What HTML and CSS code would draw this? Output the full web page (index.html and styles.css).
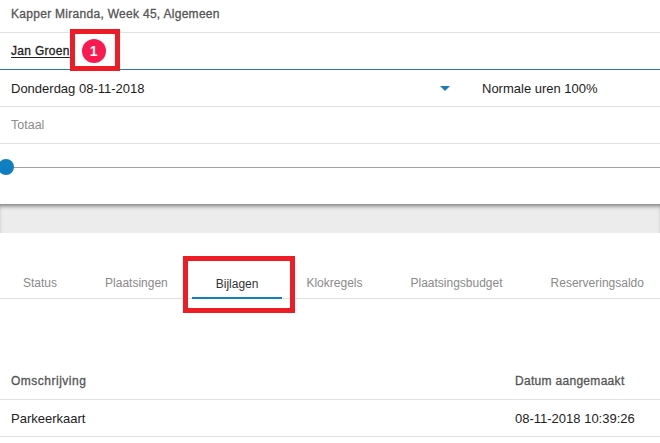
FILE: index.html
```html
<!DOCTYPE html>
<html lang="nl">
<head>
<meta charset="utf-8">
<title>Bijlagen</title>
<link rel="stylesheet" href="styles.css">
</head>
<body>
<div class="page">
  <section class="panel">
    <div class="row row-title">Kapper Miranda, Week 45, Algemeen</div>
    <div class="row row-name">
      <a class="name" href="#">Jan Groen</a>
      <span class="badge">1</span>
    </div>
    <div class="row row-select">
      <span class="date">Donderdag 08-11-2018</span>
      <svg class="caret" width="10" height="5" viewBox="0 0 10 5"><path d="M0 0H10L5 5Z" fill="#1a7fb8"/></svg>
      <span class="hours">Normale uren 100%</span>
    </div>
    <div class="row row-total">Totaal</div>
    <div class="slider"><span class="track"></span><span class="knob"></span></div>
  </section>
  <div class="band"></div>
  <nav class="tabs">
    <span class="tab">Status</span>
    <span class="tab">Plaatsingen</span>
    <span class="tab active">Bijlagen</span>
    <span class="tab">Klokregels</span>
    <span class="tab">Plaatsingsbudget</span>
    <span class="tab">Reserveringsaldo</span>
  </nav>
  <div class="table">
    <div class="tr th"><span class="col-name">Omschrijving</span><span class="col-date">Datum aangemaakt</span></div>
    <div class="tr td"><span>Parkeerkaart</span><span class="col-date">08-11-2018 10:39:26</span></div>
  </div>
  <div class="mark mark-badge"></div>
  <div class="mark mark-tab"></div>
</div>
</body>
</html>
```

FILE: styles.css
```css
* { box-sizing: border-box; }
html, body { margin: 0; padding: 0; }
body { background: #fff; font-family: "Liberation Sans", Arial, sans-serif; color: #1c1c1c; overflow: hidden; }
.page { position: relative; width: 660px; height: 443px; overflow: hidden; }

.row { display: flex; align-items: center; padding: 0 11px; font-size: 13px; border-bottom: 1px solid #e0e0e0; height: 37px; }
.row-title { height: 33px; font-size: 12px; color: #555; padding-bottom: 4px; letter-spacing: 0.29px; -webkit-text-stroke: 0.3px #555; }
.row-name { border-bottom-color: #2a78a8; }
.name { font-size: 12px; color: #222; letter-spacing: 0.3px; text-decoration: underline; text-underline-offset: 2px; -webkit-text-stroke: 0.3px #222; }
.badge { display: flex; align-items: center; justify-content: center; width: 24px; height: 24px; margin-left: 12px; border-radius: 50%; background: #fb1a4f; color: #fff; font-size: 14px; font-weight: 700; }
.date { flex: 1; }
.caret { margin-right: 32px; }
.hours { width: 167px; }
.row-total { color: #8c8c8c; font-size: 12.5px; }

.slider { position: relative; height: 60px; }
.track { position: absolute; left: 8px; right: 0; top: 23px; height: 1px; background: #a0a0a0; }
.knob { position: absolute; left: -2px; top: 15px; width: 16px; height: 16px; border-radius: 50%; background: #0f7fc2; }

.band { height: 29px; background: #ececec; box-shadow: inset 0 4px 4px -2px #7a7a7a; }

.tabs { display: flex; height: 65px; padding-top: 33px; border-bottom: 1px solid #e0e0e0; margin-top: 1px; }
.tab { padding: 9px 24px 0; font-size: 12px; color: #8a8a8a; height: 31px; }
.tab:first-child { padding-left: 23px; }
.tab.active { color: #333; border-bottom: 2px solid #157fb9; padding-top: 10px; height: 32px; }

.table { padding-top: 64px; }
.tr { display: flex; justify-content: space-between; align-items: center; height: 37px; padding: 0 11px; border-bottom: 1px solid #e0e0e0; }
.th { font-size: 12px; color: #555; letter-spacing: 0.3px; -webkit-text-stroke: 0.3px #555; }
.col-name { letter-spacing: 0.5px; }
.td { font-size: 13px; color: #222; }
.col-date { width: 134px; }

.mark { position: absolute; border: 5px solid #ee1c25; }
.mark-badge { left: 70px; top: 29px; width: 50px; height: 42px; }
.mark-tab { left: 183px; top: 256px; width: 112px; height: 57px; }
```
